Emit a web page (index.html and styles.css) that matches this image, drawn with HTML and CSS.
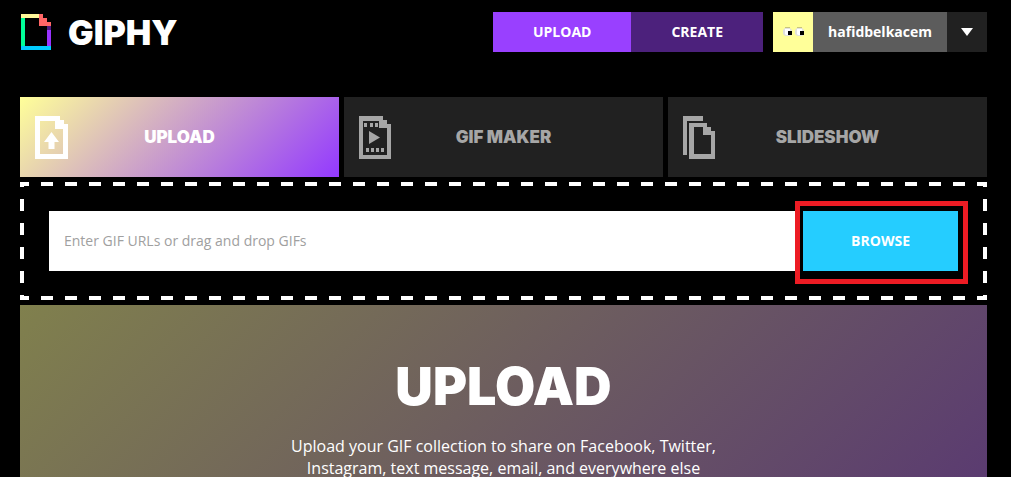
FILE: index.html
```
<!DOCTYPE html>
<html lang="en">
<head>
    <meta charset="UTF-8">
    <meta name="viewport" content="width=device-width, initial-scale=1.0">
    <title>Upload | GIPHY</title>
    <link rel="stylesheet" href="styles.css">
</head>
<body>
    <div class="container">
        <header class="header">
            <a class="logo" href="#">
                <svg width="30" height="36" viewBox="0 0 30 36" shape-rendering="crispEdges" aria-hidden="true">
                    <path fill="#fff799" d="M0 0h18v4H0z"/>
                    <path fill="#00ff99" d="M0 4h4v28H0z"/>
                    <path fill="#00ccff" d="M0 32h30v4H0z"/>
                    <path fill="#9933ff" d="M26 16h4v16h-4z"/>
                    <path fill="#4e1c82" d="M26 12h4v4h-4z"/>
                    <path fill="#ff6666" d="M18 0h4v4h4v4h4v4H18z"/>
                </svg>
                <span>GIPHY</span>
            </a>
            <nav class="nav">
                <a class="nav-upload" href="#">UPLOAD</a>
                <a class="nav-create" href="#">CREATE</a>
            </nav>
            <div class="user">
                <a class="avatar" href="#" aria-label="Profile">
                    <svg width="40" height="40" viewBox="0 0 40 40" aria-hidden="true">
                        <path fill="#c9c47c" d="M12 15h5v1h-5zM24 15h5v1h-5z"/>
                        <path fill="#e2e2dc" d="M10 18l2-2h5l2 2v5l-2 1h-5l-2-2zM22 18l2-2h5l2 2v5l-2 1h-5l-2-2z"/>
                        <path fill="#fff" d="M12 17h5v6h-4l-1-1zM24 17h5v6h-4l-1-1z"/>
                        <path fill="#000" d="M15 19h4v4h-4zM27 19h4v4h-4z"/>
                    </svg>
                </a>
                <a class="username" href="#">hafidbelkacem</a>
                <button class="user-menu" type="button" aria-label="Open menu">
                    <svg width="12" height="8" viewBox="0 0 12 8" aria-hidden="true"><path fill="#fff" d="M0 0h12L6 8z"/></svg>
                </button>
            </div>
        </header>

        <main>
            <div class="tabs">
                <button class="tab active" type="button">
                    <svg width="33" height="43" viewBox="0 0 33 43" aria-hidden="true">
                        <path fill="currentColor" fill-rule="evenodd" d="M0 0h25v4h4v4h4v35H0zM5 5v33h23V13h-8V5z"/>
                        <path fill="currentColor" d="M16.500 16l7.500 10h-4.500v7h-6v-7H9z"/>
                    </svg>
                    <span>UPLOAD</span>
                </button>
                <button class="tab" type="button">
                    <svg width="33" height="43" viewBox="0 0 33 43" aria-hidden="true">
                        <path fill="currentColor" fill-rule="evenodd" d="M0 0h24v4h4v4h4v35H0zM4 5v34h24V12h-8V5z"/>
                        <path fill="currentColor" d="M5 7h3v4H5zM11 7h3v4h-3zM16 7h3v4h-3zM7 32h3v4H7zM12 32h3v4h-3zM17 32h3v4h-3zM22 32h3v4h-3z"/>
                        <path fill="currentColor" d="M10 15l11 6.500L10 28z"/>
                    </svg>
                    <span>GIF MAKER</span>
                </button>
                <button class="tab" type="button">
                    <svg width="33" height="43" viewBox="0 0 33 43" aria-hidden="true">
                        <path fill="currentColor" d="M0 0h20v5H4v34H0z"/>
                        <path fill="currentColor" fill-rule="evenodd" d="M6 7h18v4h4v4h4v28H6zM11 11v27h17V19h-8v-8z"/>
                    </svg>
                    <span>SLIDESHOW</span>
                </button>
            </div>

            <form class="dropzone">
                <input class="url-input" type="text" placeholder="Enter GIF URLs or drag and drop GIFs" aria-label="GIF URLs">
                <div class="browse">
                    <button type="button">BROWSE</button>
                </div>
            </form>

            <section class="hero">
                <h1>UPLOAD</h1>
                <p>Upload your GIF collection to share on Facebook, Twitter, Instagram, text message, email, and everywhere else</p>
            </section>
        </main>
    </div>
</body>
</html>
```
FILE: styles.css
```
* {
    box-sizing: border-box;
}
body {
    margin: 0;
    background-color: #000;
    color: #fff;
    font-family: "Open Sans", sans-serif;
    font-size: 14px;
}
a {
    color: #fff;
    text-decoration: none;
}
button {
    border: none;
    padding: 0;
    color: #fff;
    font-family: inherit;
    cursor: pointer;
}
svg {
    display: block;
}
.container {
    padding: 12px 24px 0 20px;
}

/* header */
.header {
    display: flex;
    align-items: center;
    height: 40px;
    margin-bottom: 45px;
    font-weight: bold;
}
.logo {
    display: flex;
    align-items: center;
    gap: 17px;
    margin-right: auto;
    padding: 2px 0 0 1px;
    font-family: Inter, sans-serif;
    font-size: 34px;
    font-weight: 900;
    line-height: 38px;
}
.logo svg {
    margin-bottom: 2px;
}
.nav {
    display: flex;
    margin-right: 10px;
    line-height: 40px;
}
.nav a {
    padding: 0 40px;
}
.nav-upload {
    background-color: #9940ff;
}
.nav-create {
    background-color: #4c217c;
}
.user {
    display: flex;
    line-height: 40px;
}
.avatar {
    background-color: #ffff99;
}
.username {
    padding: 0 15px;
    background-color: #5c5c5c;
}
.user-menu {
    display: flex;
    align-items: center;
    justify-content: center;
    width: 40px;
    background-color: #212121;
}

/* tabs */
.tabs {
    display: grid;
    grid-template-columns: repeat(3, 1fr);
    gap: 5px;
    margin-bottom: 5px;
}
.tab {
    display: grid;
    grid-template-columns: 33px 1fr 33px;
    align-items: center;
    height: 80px;
    padding: 0 15px;
    background-color: #212121;
    color: #a6a6a6;
    font-family: Inter, sans-serif;
    font-size: 17px;
    font-weight: 900;
}
.tab.active {
    background: linear-gradient(135deg, #ffff99, #9339ff);
    color: #fff;
}

/* url box, dashes are 12px on and 12px off */
.dropzone {
    display: flex;
    gap: 5px;
    margin-bottom: 5px;
    padding: 29px;
    background-image:
        linear-gradient(90deg, #fff 50%, transparent 50%),
        linear-gradient(90deg, #fff 50%, transparent 50%),
        linear-gradient(#fff 50%, transparent 50%),
        linear-gradient(#fff 50%, transparent 50%);
    background-size: 24px 4px, 24px 4px, 4px 24px, 4px 24px;
    background-position: -3px 0, -3px 100%, 0 -7px, 100% -7px;
    background-repeat: repeat-x, repeat-x, repeat-y, repeat-y;
}
.url-input {
    flex: 1;
    min-width: 0;
    height: 60px;
    padding: 0 15px 2px;
    border: none;
    border-radius: 0;
    background-color: #fff;
    color: #212121;
    font-family: inherit;
    font-size: 14px;
}
.url-input::placeholder {
    color: #a0a0a0;
}
.browse {
    position: relative;
    display: flex;
}
.browse button {
    padding: 0 48px 2px;
    background-color: #25cdff;
    font-size: 14px;
    font-weight: bold;
}
/* highlight around the browse button */
.browse::after {
    content: "";
    position: absolute;
    top: -10px;
    right: -10px;
    bottom: -13px;
    left: -8px;
    border: 5px solid #ed1c24;
    pointer-events: none;
}

/* hero */
.hero {
    min-height: 460px;
    padding: 52px 20px;
    background: linear-gradient(135deg, #80804d, #4a1d80 115%);
    text-align: center;
}
.hero h1 {
    margin: 0 0 18px;
    font-family: Inter, sans-serif;
    font-size: 52px;
    font-weight: 900;
    line-height: 60px;
}
.hero p {
    max-width: 440px;
    margin: 0 auto;
    font-size: 16px;
    line-height: 22px;
}
```
